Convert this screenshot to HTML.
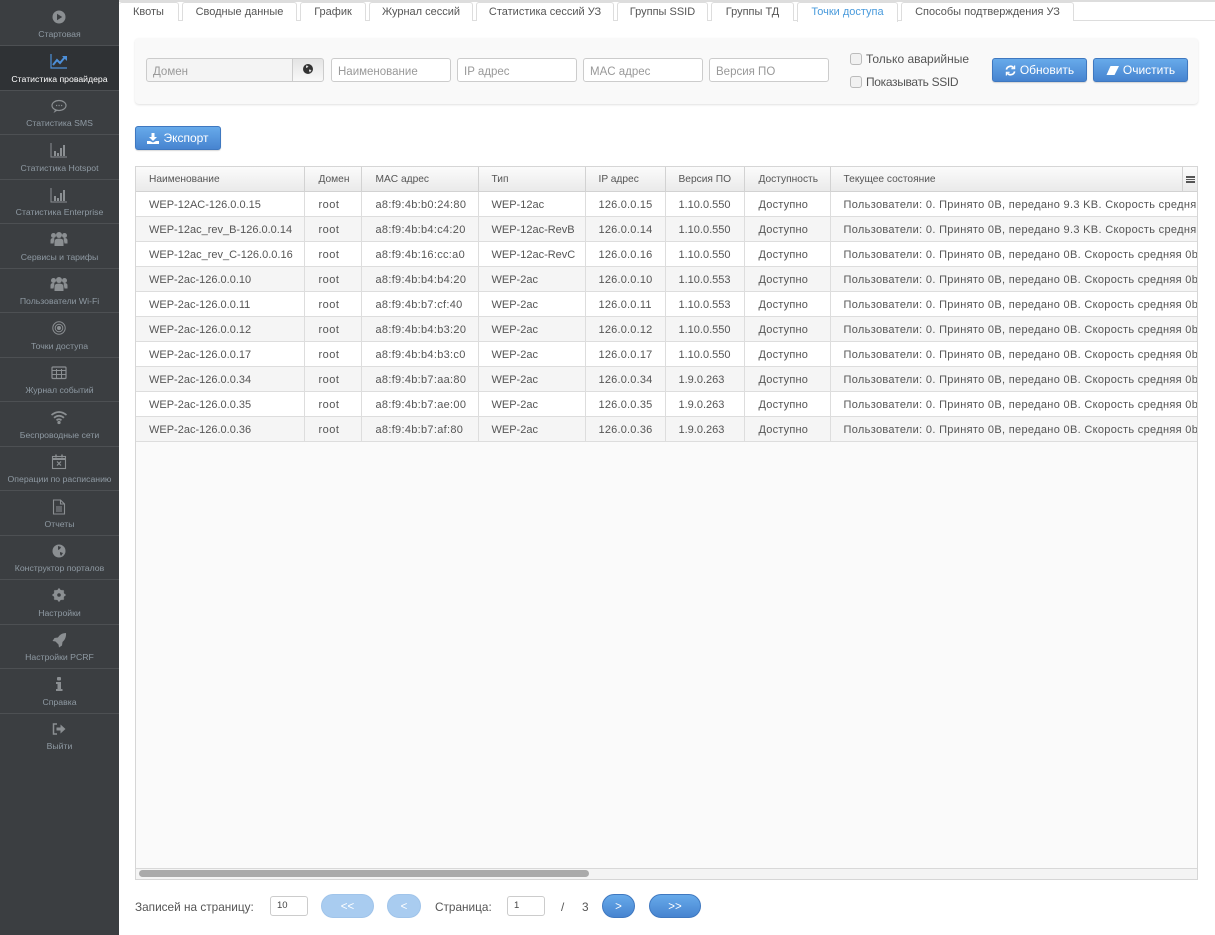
<!DOCTYPE html>
<html lang="ru"><head><meta charset="utf-8"><title>Точки доступа</title>
<style>
*{box-sizing:border-box}
html,body{margin:0;padding:0;width:1215px;height:935px;overflow:hidden;background:#fff;font-family:"Liberation Sans",sans-serif;color:#555}
.abs,.side a,.tab,.inp,.btn,.lbl,.sep{position:absolute}
#side{position:absolute;left:0;top:0;width:119px;height:935px;background:#3b3e41}
.sep{left:0;width:119px;height:1px;background:#4d5053}
.side a{left:0;width:119px;text-align:center;font-size:8.7px;line-height:12px;color:#8f9aa3;white-space:nowrap;text-decoration:none}
.ic{position:absolute;left:49px;width:20px;height:20px}
.ic svg{display:block}
#top{position:absolute;left:119px;top:0;width:1096px;height:21px;background:#fff;border-top:2px solid #ddd;border-bottom:1px solid #ddd}
.tab{top:2px;height:19px;border:1px solid #ddd;border-bottom:0;border-radius:3px 3px 0 0;font-size:11px;line-height:18px;text-align:center;color:#555;background:#fff;white-space:nowrap}
.tab.on{color:#4a9bdc;height:20px;z-index:2}
#panel{position:absolute;left:135px;top:38px;width:1063px;height:66px;background:#f9f9f9;border-radius:4px;box-shadow:0 1px 2px rgba(0,0,0,.12)}
.inp{top:58px;height:24px;border:1px solid #ccc;border-radius:3px;background:#fff;font-size:11.5px;line-height:26px;padding-left:6px;color:#999;white-space:nowrap}
.btn{color:#fff;font-size:12px;line-height:23px;text-align:center;border:1px solid #3f78c0;border-radius:3px;background:linear-gradient(#67aaea,#4784d0);white-space:nowrap;box-shadow:0 1px 1px rgba(0,0,0,.15)}
.btn svg{vertical-align:-2px;margin-right:4px}
.cb{position:absolute;left:850px;width:12px;height:12px;border:1px solid #bbb;border-radius:3px;background:#f1f1f1}
.lbl{font-size:12px;color:#555;white-space:nowrap}
#tbl{position:absolute;left:135px;top:166px;width:1063px;height:714px;border:1px solid #d6d6d6;background:#fafafa;overflow:hidden}
table{border-collapse:collapse;table-layout:fixed;width:1062px;font-size:11px;color:#555}
th{height:24px;font-weight:normal;font-size:10.2px;text-align:left;padding:2px 0 0 13px;background:linear-gradient(#fbfbfb,#eaeaea);border-right:1px solid #d2d2d2;border-bottom:1px solid #d2d2d2;white-space:nowrap;overflow:hidden}
td{height:25px;padding:2px 0 0 13px;border-right:1px solid #ddd;border-bottom:1px solid #ddd;white-space:nowrap;overflow:hidden;background:#fff}
tr:nth-child(even) td{background:#f5f5f5}
td:last-child,th:last-child{border-right:0}
td:last-child{letter-spacing:.32px}
td:nth-child(2){letter-spacing:.5px;padding-left:14px}
td:nth-child(3){letter-spacing:.3px;padding-left:14px}
td:nth-child(5){letter-spacing:.2px}
td:nth-child(7){letter-spacing:.2px;padding-left:14px}
th:nth-child(2),th:nth-child(3),th:nth-child(7){padding-left:14px}
#menu{position:absolute;right:0;top:0;width:15px;height:24px;border-left:1px solid #d2d2d2;background:linear-gradient(#fbfbfb,#eaeaea)}
#menu i{position:absolute;left:3px;width:9px;height:1.5px;background:#555}
#sb{position:absolute;left:0;right:0;top:701px;height:12px;background:#f4f4f4;border-top:1px solid #d8d8d8}
#th{position:absolute;left:3px;top:1px;width:450px;height:7px;background:#aaa;border-radius:4px}
.pg{position:absolute;top:894px;height:24px;border-radius:12px;color:#fff;font-size:11.5px;line-height:24px;text-align:center;border:1px solid #3f78c0;background:linear-gradient(#67aaea,#4784d0)}
.pg.off{background:#a9ccf0;border-color:#a0c4ea}
.pi{position:absolute;top:896px;width:38px;height:20px;border:1px solid #ccc;border-radius:3px;background:#fff;font-size:9.5px;line-height:18px;padding-left:6px;color:#444}
</style></head><body>
<div id="side" class="side">
<div class="abs" style="left:0;top:46px;width:119px;height:45px;background:#2f3235"></div>
<div class="sep" style="top:45px"></div><div class="sep" style="top:90px"></div><div class="sep" style="top:134px"></div><div class="sep" style="top:179px"></div><div class="sep" style="top:223px"></div><div class="sep" style="top:268px"></div><div class="sep" style="top:312px"></div><div class="sep" style="top:357px"></div><div class="sep" style="top:401px"></div><div class="sep" style="top:446px"></div><div class="sep" style="top:490px"></div><div class="sep" style="top:535px"></div><div class="sep" style="top:579px"></div><div class="sep" style="top:624px"></div><div class="sep" style="top:668px"></div><div class="sep" style="top:713px"></div>

<div class="ic" style="top:7px"><svg width="20" height="20" viewBox="0 0 20 20"><circle cx="10" cy="10" r="6.500" fill="#8b8f92"/><path d="M8 6.700l5.200 3.300L8 13.300z" fill="#3b3e41"/></svg></div>
<a style="top:28px">Стартовая</a>
<div class="ic" style="top:51px"><svg width="20" height="20" viewBox="0 0 20 20" fill="none"><path d="M2 3v14h16" stroke="#4d8fd8" stroke-width="1.200"/><path d="M4 14l4-5 3 3 5-6" stroke="#4d8fd8" stroke-width="2"/><path d="M13 5h5v5z" fill="#4d8fd8"/></svg></div>
<a style="top:73px;color:#fff">Статистика провайдера</a>
<div class="ic" style="top:96px"><svg width="20" height="20" viewBox="0 0 20 20" fill="none"><ellipse cx="10" cy="9.500" rx="7" ry="5" stroke="#8b8f92" stroke-width="1.200"/><path d="M6 14l-1.500 3 4-2.500" fill="#8b8f92"/><path d="M7 9.500h1.200M9.500 9.500h1.200M12 9.500h1.200" stroke="#8b8f92" stroke-width="1.300"/></svg></div>
<a style="top:117px">Статистика SMS</a>
<div class="ic" style="top:140px"><svg width="20" height="20" viewBox="0 0 20 20" fill="none"><path d="M2 3v14h16" stroke="#8b8f92"/><path d="M6 11v5M9 13v3M12 8v8M15 5v11" stroke="#8b8f92" stroke-width="2"/></svg></div>
<a style="top:162px">Статистика Hotspot</a>
<div class="ic" style="top:185px"><svg width="20" height="20" viewBox="0 0 20 20" fill="none"><path d="M2 3v14h16" stroke="#8b8f92"/><path d="M6 11v5M9 13v3M12 8v8M15 5v11" stroke="#8b8f92" stroke-width="2"/></svg></div>
<a style="top:206px">Статистика Enterprise</a>
<div class="ic" style="top:229px"><svg width="20" height="20" viewBox="0 0 20 20" fill="#8b8f92"><circle cx="10" cy="6" r="3"/><circle cx="4.500" cy="6.500" r="2.500"/><circle cx="15.500" cy="6.500" r="2.500"/><path d="M5.500 17v-4.500q0-3 4.500-3t4.500 3V17zM1.500 14.500v-3q0-2.500 3-2.500l1 .5-1 5zM18.500 14.500v-3q0-2.500-3-2.500l-1 .5 1 5z"/></svg></div>
<a style="top:251px">Сервисы и тарифы</a>
<div class="ic" style="top:274px"><svg width="20" height="20" viewBox="0 0 20 20" fill="#8b8f92"><circle cx="10" cy="6" r="3"/><circle cx="4.500" cy="6.500" r="2.500"/><circle cx="15.500" cy="6.500" r="2.500"/><path d="M5.500 17v-4.500q0-3 4.500-3t4.500 3V17zM1.500 14.500v-3q0-2.500 3-2.500l1 .5-1 5zM18.500 14.500v-3q0-2.500-3-2.500l-1 .5 1 5z"/></svg></div>
<a style="top:295px">Пользователи Wi-Fi</a>
<div class="ic" style="top:318px"><svg width="20" height="20" viewBox="0 0 20 20" fill="none" stroke="#8b8f92"><circle cx="10" cy="10" r="6.200"/><circle cx="10" cy="10" r="3.800"/><circle cx="10" cy="10" r="1.500" fill="#8b8f92"/></svg></div>
<a style="top:340px">Точки доступа</a>
<div class="ic" style="top:363px"><svg width="20" height="20" viewBox="0 0 20 20" fill="none" stroke="#8b8f92"><rect x="3" y="4" width="14" height="11.500" rx="1" stroke-width="1.200"/><path d="M3 7.500h14M3 11.500h14M7.500 6v9.500M12.500 6v9.500"/></svg></div>
<a style="top:384px">Журнал событий</a>
<div class="ic" style="top:407px"><svg width="20" height="20" viewBox="0 0 20 20" fill="none" stroke="#8b8f92" stroke-width="1.700"><path d="M2.500 8q7.500-6 15 0M5 10.800q5-4 10 0M7.500 13.300q2.500-2 5 0"/><circle cx="10" cy="15.500" r=".8" fill="#8b8f92"/></svg></div>
<a style="top:429px">Беспроводные сети</a>
<div class="ic" style="top:452px"><svg width="20" height="20" viewBox="0 0 20 20" fill="none" stroke="#8b8f92"><rect x="3.500" y="4.500" width="13" height="12" stroke-width="1.100"/><path d="M3.500 7h13" stroke-width="2"/><path d="M7 2.500v3M13 2.500v3" stroke-width="1.500"/><path d="M8 9.500l4 4M12 9.500l-4 4" stroke-width="1.200"/></svg></div>
<a style="top:473px">Операции по расписанию</a>
<div class="ic" style="top:497px"><svg width="20" height="20" viewBox="0 0 20 20" fill="none" stroke="#8b8f92" stroke-width="1.100"><path d="M4.500 3h7l4 4v10h-11zM11.500 3v4h4"/><path d="M7 10h6M7 12h6M7 14h6"/></svg></div>
<a style="top:518px">Отчеты</a>
<div class="ic" style="top:541px"><svg width="20" height="20" viewBox="0 0 20 20"><circle cx="10" cy="10" r="6.500" fill="#8b8f92"/><path d="M9 5l3 1-1 2-2 1zM11 11l3 1-2 3-1-2z" fill="#3b3e41"/></svg></div>
<a style="top:562px">Конструктор порталов</a>
<div class="ic" style="top:585px"><svg width="20" height="20" viewBox="0 0 20 20" fill="none"><circle cx="10" cy="10" r="4" stroke="#8b8f92" stroke-width="3"/><path d="M10 3.500v13M3.500 10h13M5.400 5.400l9.200 9.200M14.600 5.400l-9.200 9.200" stroke="#8b8f92" stroke-width="2"/><circle cx="10" cy="10" r="1.800" fill="#3b3e41"/></svg></div>
<a style="top:607px">Настройки</a>
<div class="ic" style="top:630px"><svg width="20" height="20" viewBox="0 0 20 20" fill="#8b8f92"><path d="M17 3q.5 5.500-3.500 9l-.5 3.500-3 2-.5-3-3-3-3-.5 2-3 3.500-.5Q11.500 3 17 3z"/></svg></div>
<a style="top:651px">Настройки PCRF</a>
<div class="ic" style="top:674px"><svg width="20" height="20" viewBox="0 0 20 20" fill="#8b8f92"><rect x="8" y="3" width="4" height="3.500" rx="1"/><path d="M7 8h5v7h1.500v2h-6.500v-2h1.500v-5H7z"/></svg></div>
<a style="top:696px">Справка</a>
<div class="ic" style="top:719px"><svg width="20" height="20" viewBox="0 0 20 20" fill="none"><path d="M8 5H4.500v10H8" stroke="#8b8f92" stroke-width="1.500"/><path d="M7.500 8.500h4V5.500l5 4.500-5 4.500v-3h-4z" fill="#8b8f92"/></svg></div>
<a style="top:740px">Выйти</a>
</div>

<div id="top"></div>
<div class="tab" style="left:119px;width:60px;border-left:0">Квоты</div>
<div class="tab" style="left:182px;width:115px">Сводные данные</div>
<div class="tab" style="left:300px;width:66px">График</div>
<div class="tab" style="left:369px;width:104px">Журнал сессий</div>
<div class="tab" style="left:476px;width:138px">Статистика сессий УЗ</div>
<div class="tab" style="left:617px;width:91px">Группы SSID</div>
<div class="tab" style="left:711px;width:83px">Группы ТД</div>
<div class="tab on" style="left:797px;width:101px">Точки доступа</div>
<div class="tab" style="left:901px;width:173px">Способы подтверждения УЗ</div>

<div id="panel"></div>
<div class="inp" style="left:146px;width:147px;border-radius:3px 0 0 3px;background:#f4f4f4">Домен</div>
<div class="abs" style="left:292px;top:58px;width:32px;height:24px;border:1px solid #ccc;border-radius:0 3px 3px 0;background:linear-gradient(#e4e4e4,#f8f8f8)"><svg style="position:absolute;left:10px;top:5px" width="10" height="10" viewBox="0 0 10 10"><circle cx="5" cy="5" r="5" fill="#333"/><path d="M3 1.500l2.500.5-1 1.500-1.500.5zM6 5.500l2.500.5L7 8.500 6 7z" fill="#ddd"/></svg></div>
<div class="inp" style="left:331px;width:120px">Наименование</div>
<div class="inp" style="left:457px;width:120px">IP адрес</div>
<div class="inp" style="left:583px;width:120px">MAC адрес</div>
<div class="inp" style="left:709px;width:120px">Версия ПО</div>
<div class="cb" style="top:53px"></div><div class="lbl" style="left:866px;top:52px">Только аварийные</div>
<div class="cb" style="top:76px"></div><div class="lbl" style="left:866px;top:75px;letter-spacing:-.33px">Показывать SSID</div>
<div class="btn" style="left:992px;top:58px;width:95px;height:24px"><svg width="11" height="11" viewBox="0 0 12 12" fill="none" stroke="#fff" stroke-width="1.800"><path d="M1.500 5a4.500 4.500 0 0 1 8-1.800M10.500 7a4.500 4.500 0 0 1-8 1.800"/><path d="M10.500 0.500v3.500H7M1.500 11.500V8H5" stroke-width="1.300"/></svg>Обновить</div>
<div class="btn" style="left:1093px;top:58px;width:95px;height:24px"><svg width="13" height="9" viewBox="0 0 13 9" fill="#fff" style="vertical-align:-1px;margin-right:4px"><path d="M4.500 0H13L8.500 9H0.500z"/></svg>Очистить</div>
<div class="btn" style="left:135px;top:126px;width:86px;height:24px"><svg width="12" height="11" viewBox="0 0 12 11" fill="#fff"><path d="M4.500 0h3v4H10L6 8 2 4h2.500zM0 8h3l3 1.500L9 8h3v3H0z"/></svg>Экспорт</div>

<div id="tbl">
<table><colgroup><col style="width:168px"><col style="width:57px"><col style="width:117px"><col style="width:107px"><col style="width:80px"><col style="width:79px"><col style="width:86px"><col style="width:368px"></colgroup>
<thead><tr><th>Наименование</th><th>Домен</th><th>MAC адрес</th><th>Тип</th><th>IP адрес</th><th>Версия ПО</th><th>Доступность</th><th>Текущее состояние</th></tr></thead>
<tbody>
<tr><td>WEP-12AC-126.0.0.15</td><td>root</td><td>a8:f9:4b:b0:24:80</td><td>WEP-12ac</td><td>126.0.0.15</td><td>1.10.0.550</td><td>Доступно</td><td>Пользователи: 0. Принято 0B, передано 9.3 KB. Скорость средня</td></tr>
<tr><td>WEP-12ac_rev_B-126.0.0.14</td><td>root</td><td>a8:f9:4b:b4:c4:20</td><td>WEP-12ac-RevB</td><td>126.0.0.14</td><td>1.10.0.550</td><td>Доступно</td><td>Пользователи: 0. Принято 0B, передано 9.3 KB. Скорость средня</td></tr>
<tr><td>WEP-12ac_rev_C-126.0.0.16</td><td>root</td><td>a8:f9:4b:16:cc:a0</td><td>WEP-12ac-RevC</td><td>126.0.0.16</td><td>1.10.0.550</td><td>Доступно</td><td>Пользователи: 0. Принято 0B, передано 0B. Скорость средняя 0b</td></tr>
<tr><td>WEP-2ac-126.0.0.10</td><td>root</td><td>a8:f9:4b:b4:b4:20</td><td>WEP-2ac</td><td>126.0.0.10</td><td>1.10.0.553</td><td>Доступно</td><td>Пользователи: 0. Принято 0B, передано 0B. Скорость средняя 0b</td></tr>
<tr><td>WEP-2ac-126.0.0.11</td><td>root</td><td>a8:f9:4b:b7:cf:40</td><td>WEP-2ac</td><td>126.0.0.11</td><td>1.10.0.553</td><td>Доступно</td><td>Пользователи: 0. Принято 0B, передано 0B. Скорость средняя 0b</td></tr>
<tr><td>WEP-2ac-126.0.0.12</td><td>root</td><td>a8:f9:4b:b4:b3:20</td><td>WEP-2ac</td><td>126.0.0.12</td><td>1.10.0.550</td><td>Доступно</td><td>Пользователи: 0. Принято 0B, передано 0B. Скорость средняя 0b</td></tr>
<tr><td>WEP-2ac-126.0.0.17</td><td>root</td><td>a8:f9:4b:b4:b3:c0</td><td>WEP-2ac</td><td>126.0.0.17</td><td>1.10.0.550</td><td>Доступно</td><td>Пользователи: 0. Принято 0B, передано 0B. Скорость средняя 0b</td></tr>
<tr><td>WEP-2ac-126.0.0.34</td><td>root</td><td>a8:f9:4b:b7:aa:80</td><td>WEP-2ac</td><td>126.0.0.34</td><td>1.9.0.263</td><td>Доступно</td><td>Пользователи: 0. Принято 0B, передано 0B. Скорость средняя 0b</td></tr>
<tr><td>WEP-2ac-126.0.0.35</td><td>root</td><td>a8:f9:4b:b7:ae:00</td><td>WEP-2ac</td><td>126.0.0.35</td><td>1.9.0.263</td><td>Доступно</td><td>Пользователи: 0. Принято 0B, передано 0B. Скорость средняя 0b</td></tr>
<tr><td>WEP-2ac-126.0.0.36</td><td>root</td><td>a8:f9:4b:b7:af:80</td><td>WEP-2ac</td><td>126.0.0.36</td><td>1.9.0.263</td><td>Доступно</td><td>Пользователи: 0. Принято 0B, передано 0B. Скорость средняя 0b</td></tr>
</tbody></table>
<div id="menu"><i style="top:9px"></i><i style="top:11.5px"></i><i style="top:14px"></i></div>
<div id="sb"><div id="th"></div></div>
</div>

<div class="lbl" style="left:135px;top:900px;font-size:11.8px">Записей на страницу:</div>
<div class="pi" style="left:270px">10</div>
<div class="pg off" style="left:321px;width:53px">&lt;&lt;</div>
<div class="pg off" style="left:387px;width:34px">&lt;</div>
<div class="lbl" style="left:435px;top:900px;font-size:11.8px">Страница:</div>
<div class="pi" style="left:507px">1</div>
<div class="lbl" style="left:561px;top:900px;font-size:11.8px">/</div>
<div class="lbl" style="left:582px;top:900px;font-size:11.8px">3</div>
<div class="pg" style="left:602px;width:33px">&gt;</div>
<div class="pg" style="left:649px;width:52px">&gt;&gt;</div>
</body></html>
